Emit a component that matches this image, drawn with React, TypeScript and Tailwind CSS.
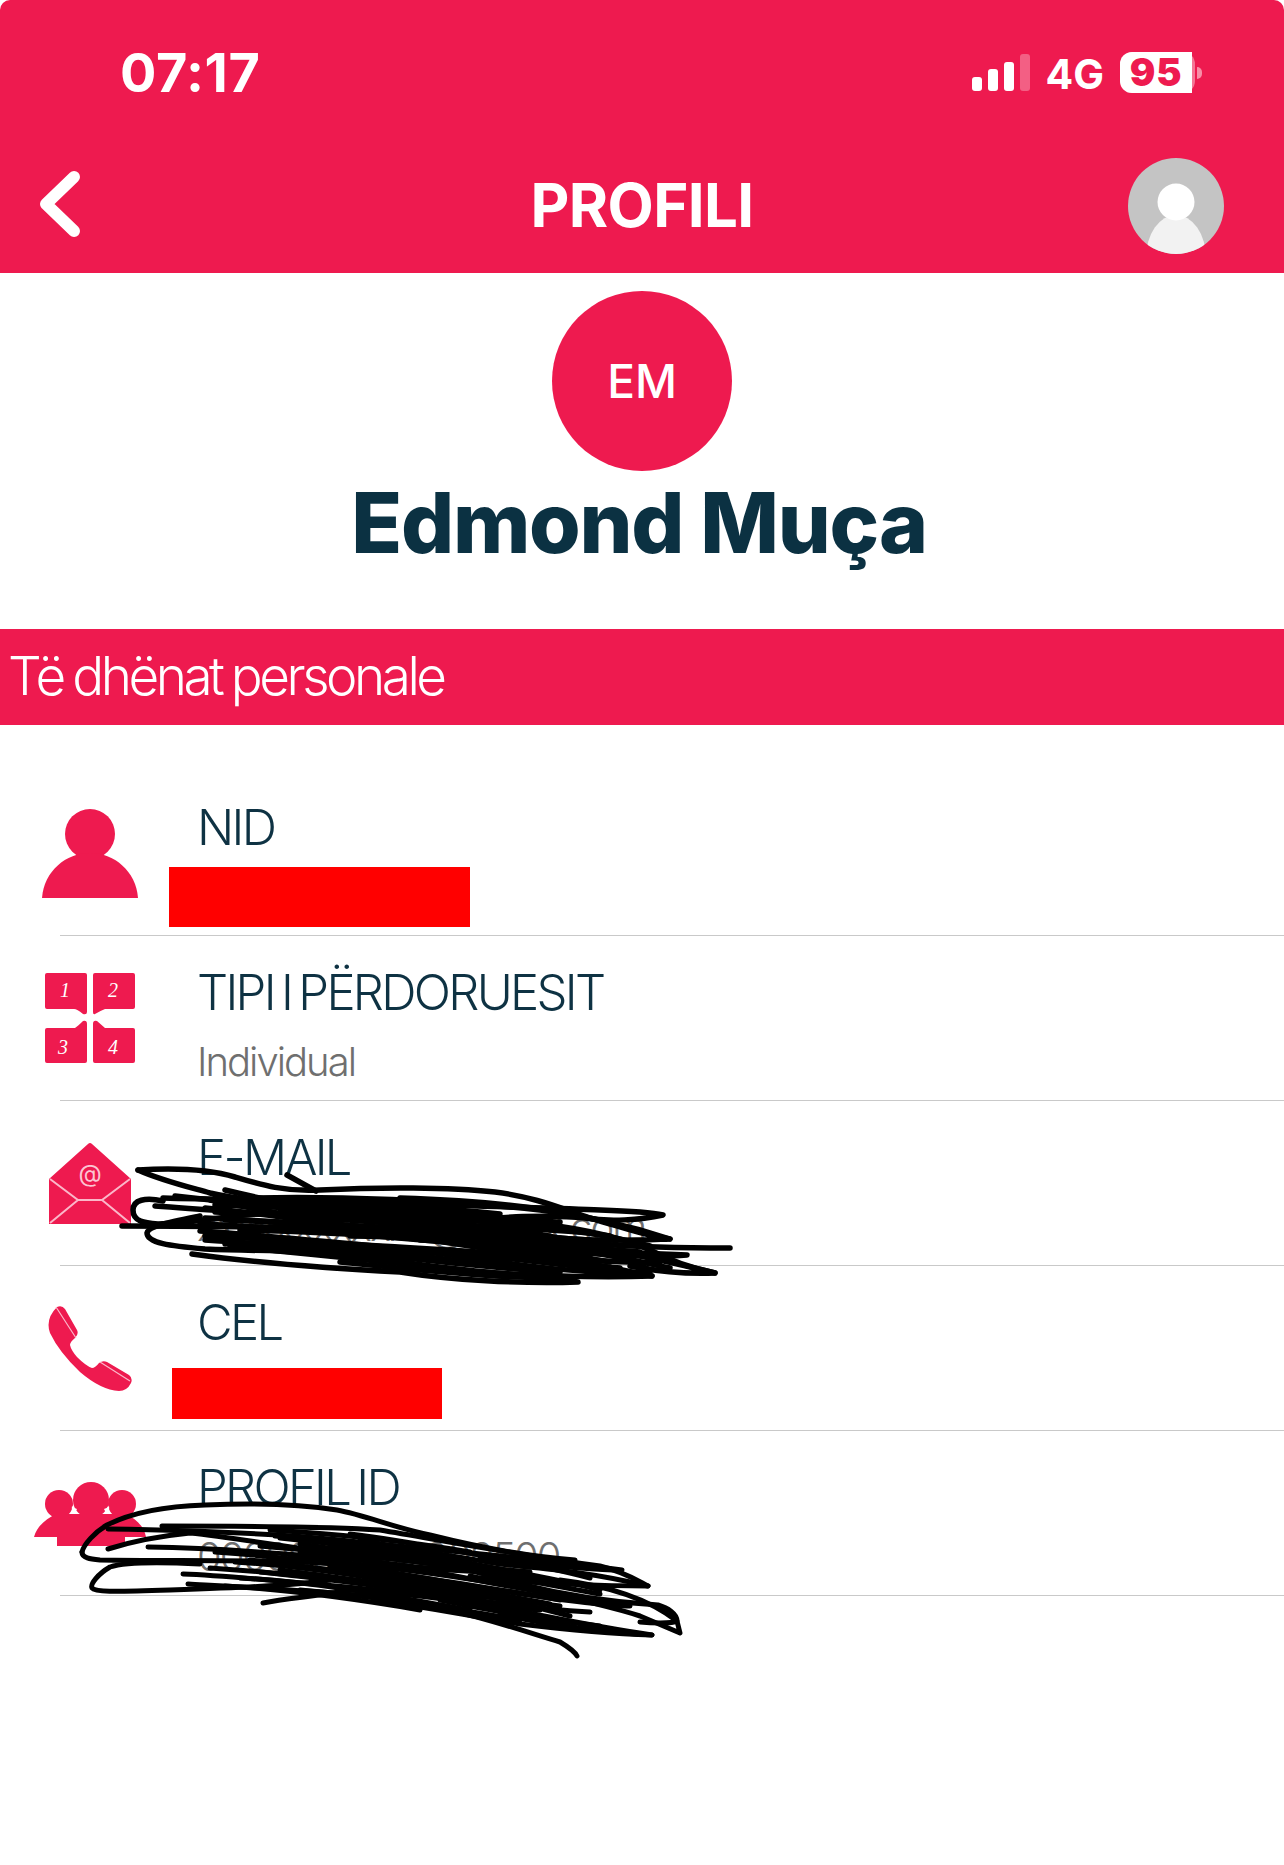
const scribbleA = [
  "M138 1170 C170 1168 205 1168 235 1177 C262 1185 285 1192 320 1190 C380 1187 450 1187 495 1192 C535 1197 560 1208 590 1218 C625 1228 645 1236 670 1239 C640 1240 600 1242 560 1238",
  "M138 1170 C160 1180 185 1186 210 1193 C240 1200 280 1204 340 1206 C420 1210 500 1216 560 1226",
  "M287 1175 L316 1191",
  "M163 1198 C230 1200 330 1200 420 1204 C500 1207 560 1208 600 1210 C630 1211 650 1212 663 1215 C640 1220 610 1222 585 1218 C530 1212 460 1222 380 1226",
  "M163 1201 C145 1197 133 1200 133 1210 C133 1222 145 1223 158 1224 C210 1222 250 1210 300 1214 C380 1220 470 1226 540 1232",
  "M122 1226 C170 1226 230 1226 300 1228 C400 1232 500 1236 600 1244 C650 1248 690 1248 730 1248",
  "M200 1216 C170 1222 148 1226 147 1233 C147 1243 170 1246 205 1249 C270 1252 340 1250 420 1252 C500 1256 560 1264 652 1276 C600 1278 540 1276 480 1272",
  "M192 1254 C250 1262 320 1268 400 1272 C450 1280 520 1284 578 1282 C540 1276 470 1272 400 1262 C340 1254 280 1252 230 1246",
  "M155 1206 C240 1212 340 1220 440 1226 C520 1232 590 1246 640 1256 C670 1262 695 1268 715 1273 C690 1274 660 1272 630 1266",
  "M175 1196 C260 1206 360 1214 470 1218 C550 1222 610 1232 650 1250 C665 1258 690 1268 715 1273",
  "M205 1208 C280 1215 380 1232 480 1240 C560 1246 620 1254 687 1255 C640 1258 560 1252 500 1246",
  "M210 1200 C300 1218 420 1240 540 1256 C590 1262 630 1272 652 1276",
  "M225 1220 C320 1224 420 1228 520 1240 C570 1245 610 1250 640 1252",
  "M225 1190 C300 1208 400 1226 500 1230 C560 1234 610 1250 650 1270",
  "M255 1198 C330 1196 450 1200 540 1210 C590 1216 630 1226 670 1239",
  "M205 1236 C300 1240 400 1246 500 1262 C540 1268 600 1274 650 1272",
  "M225 1244 C320 1238 420 1250 520 1254 C570 1258 620 1264 660 1262",
  "M260 1206 C340 1204 430 1212 500 1218 M280 1212 C360 1214 460 1218 560 1228",
  "M240 1230 C340 1232 440 1240 540 1244 M270 1222 C380 1226 470 1232 590 1240",
  "M260 1240 C340 1246 420 1256 520 1268 M300 1250 C380 1252 450 1266 560 1272",
  "M400 1198 C460 1200 520 1204 570 1214 M420 1212 C480 1216 530 1226 610 1236",
  "M330 1218 C400 1216 470 1226 530 1236 M350 1236 C420 1236 480 1246 540 1252",
  "M420 1222 C480 1232 520 1236 590 1250 M450 1250 C510 1258 570 1264 620 1268",
  "M215 1198 C300 1200 400 1204 500 1214 M215 1205 C300 1207 420 1214 560 1222",
  "M215 1212 C300 1216 420 1222 580 1232 M205 1218 C300 1222 420 1232 560 1240",
  "M200 1224 C300 1228 430 1240 590 1256 M200 1231 C300 1238 430 1252 560 1262",
  "M205 1240 C300 1246 430 1260 540 1268 M245 1248 C330 1256 430 1266 500 1276",
  "M420 1240 C480 1242 540 1250 610 1262 M340 1262 C400 1268 470 1276 540 1278",
  "M560 1228 C590 1232 625 1240 650 1246 M570 1250 C610 1254 640 1262 670 1268",
];
const scribbleB = [
  "M82 1552 C84 1544 95 1532 107 1525 C135 1511 170 1506 205 1505 C250 1503 300 1504 337 1510 C365 1515 395 1528 430 1535 C470 1545 520 1556 575 1560",
  "M82 1552 C82 1558 90 1559 100 1560 C160 1561 240 1560 300 1562 C380 1566 470 1570 530 1574",
  "M108 1529 C170 1530 260 1532 340 1540 C430 1550 520 1556 622 1570 C590 1570 540 1565 480 1558",
  "M162 1526 C240 1526 320 1526 380 1530 C440 1540 500 1552 600 1566 C625 1572 640 1582 648 1586 C600 1586 540 1584 480 1578",
  "M108 1549 C130 1542 160 1536 190 1533 C240 1538 300 1550 360 1556 C430 1562 500 1572 560 1582",
  "M148 1547 C220 1548 290 1554 360 1560 C430 1568 520 1592 630 1606 C600 1606 520 1594 470 1586",
  "M200 1564 C160 1562 125 1562 110 1567 C98 1574 90 1584 92 1588 C95 1592 110 1592 170 1590 C230 1588 290 1586 330 1580",
  "M183 1574 C240 1576 330 1586 400 1592 C470 1598 560 1622 652 1635 C620 1634 540 1624 500 1614",
  "M188 1584 C260 1588 340 1592 400 1600 C470 1612 520 1630 560 1642 C570 1648 575 1652 577 1656",
  "M375 1600 C420 1606 470 1616 520 1624 C570 1630 620 1634 652 1635",
  "M263 1603 C290 1598 320 1596 350 1590 C410 1592 480 1606 540 1610",
  "M275 1536 C340 1540 420 1550 500 1564 C540 1568 590 1572 648 1586",
  "M300 1544 C370 1554 450 1562 520 1584 C560 1594 610 1602 658 1605 C668 1608 677 1614 677 1621 C672 1624 650 1623 640 1622",
  "M560 1580 C610 1586 650 1600 677 1621 L680 1633 L640 1616 C590 1600 530 1590 470 1576",
  "M250 1560 C330 1570 430 1580 540 1596 M280 1570 C360 1580 440 1592 560 1606",
  "M300 1552 C370 1560 440 1574 520 1572 M340 1580 C420 1590 490 1606 590 1612",
  "M360 1540 C420 1550 480 1570 540 1578 M420 1552 C470 1566 530 1572 600 1590",
  "M270 1530 C340 1534 400 1540 470 1552 M350 1534 C400 1540 440 1548 510 1560",
  "M215 1552 C300 1558 400 1572 490 1590 M210 1568 C300 1574 400 1586 500 1604",
  "M260 1546 C330 1552 420 1560 490 1572 M240 1578 C320 1582 400 1598 470 1610",
  "M330 1566 C400 1574 470 1584 560 1600 M300 1590 C370 1596 440 1606 520 1620",
  "M400 1560 C460 1566 510 1578 600 1594",
  "M280 1538 C340 1544 400 1552 460 1562 M290 1557 C360 1564 430 1572 500 1584",
  "M235 1562 C300 1566 380 1578 460 1594 M260 1572 C340 1580 410 1590 480 1600",
  "M330 1546 C390 1552 450 1566 530 1572 M360 1572 C420 1582 490 1592 550 1604",
  "M225 1586 C290 1590 350 1598 420 1610 M400 1580 C460 1590 510 1600 570 1616",
  "M430 1546 C480 1556 530 1562 590 1578 M440 1600 C490 1610 530 1618 600 1626",
];
const sans = "font-['Inter',sans-serif]";
const rowLabel = "text-[49px] font-light leading-[64px] tracking-[-0.055em] [word-spacing:-0.08em] text-[#0e3243]";

function PersonIcon() {
  return (
    <svg viewBox="0 0 96 89" className="ml-[42px] mt-[38px] h-[89px] w-[96px] fill-[#ee1a4f]">
      <circle cx="48" cy="25" r="25" />
      <path d="M0 89 C2 62 24 44 48 44 C72 44 94 62 96 89 Z" />
    </svg>
  );
}

function NumbersIcon() {
  return (
    <svg viewBox="0 0 90 90" className="ml-[45px] mt-[37px] h-[90px] w-[90px]">
      <g className="fill-[#ee1a4f]">
        <path d="M2 0 H40 Q42 0 42 2 V39 Q42 42 38 41 Q32 36 29 36 H2 Q0 36 0 34 V2 Q0 0 2 0 Z" />
        <path d="M50 0 H88 Q90 0 90 2 V34 Q90 36 88 36 H60 Q55 38 50 41 Q48 42 48 39 V2 Q48 0 50 0 Z" />
        <path d="M38 48 Q42 47 42 51 V88 Q42 90 40 90 H2 Q0 90 0 88 V57 Q0 55 2 55 H30 Q33 53 38 48 Z" />
        <path d="M52 48 L60 55 H88 Q90 55 90 57 V88 Q90 90 88 90 H50 Q48 90 48 88 V51 Q48 47 52 48 Z" />
      </g>
      <g className="fill-white font-['Liberation_Serif',serif] text-[20px] italic" textAnchor="middle">
        <text x="20" y="24">1</text>
        <text x="68" y="24">2</text>
        <text x="18" y="81">3</text>
        <text x="68" y="81">4</text>
      </g>
    </svg>
  );
}

function MailIcon() {
  return (
    <svg viewBox="0 0 82 81" className="ml-[49px] mt-[42px] h-[81px] w-[82px]">
      <path d="M39 1 Q41 -1 43 1 L82 36 V81 H0 V36 Z" className="fill-[#ee1a4f]" />
      <path d="M1 36 L29 57 H53 L81 36 M1 80 L29 57 M53 57 L81 80" className="fill-none stroke-[#fbb7c9]" strokeWidth="2" />
      <text x="41" y="39" textAnchor="middle" className="fill-[#fcc5d3] text-[24px] font-normal">@</text>
    </svg>
  );
}

function PhoneIcon() {
  return (
    <svg viewBox="0 0 85 85" className="ml-[47px] mt-[40px] h-[85px] w-[85px]">
      <path
        d="M10 1 Q15 -1 18 3 L30 24 Q32 28 28 32 Q23 36 23 39 Q24 44 30 51 Q39 60 45 62 Q48 62 52 57 Q56 54 60 56 L82 69 Q86 72 84 77 Q80 85 72 85 Q54 84 33 66 Q12 46 3 27 Q-2 13 10 1 Z"
        className="fill-[#ee1a4f]"
      />
      <path d="M9 1 L29 32 M53 56 L83 75" className="fill-none stroke-[#fbb7c9]" strokeWidth="1.2" />
    </svg>
  );
}

function GroupIcon() {
  return (
    <svg viewBox="0 0 112 64" className="ml-[34px] mt-[51px] h-[64px] w-[112px] fill-[#ee1a4f]">
      <circle cx="25" cy="22" r="14" />
      <circle cx="57" cy="18" r="18" />
      <circle cx="88" cy="22" r="14" />
      <path d="M0 55 C3 44 12 37 22 32 H92 C102 37 110 44 112 55 H91 V64 H23 V55 Z" />
      <path d="M40 31 Q37 29 38 24 Q41 27 43 27 Q42 30 40 31 Z M73 31 Q76 29 75 24 Q72 27 70 27 Q71 30 73 31 Z" className="fill-white" />
    </svg>
  );
}

function Row({ icon, title, children }: { icon: React.ReactNode; title: string; children: React.ReactNode }) {
  return (
    <div>
      <div className="flex h-[164px]">
        <div className="w-[197px] shrink-0">{icon}</div>
        <div className="min-w-0 flex-1 pt-[25px]">
          <div className={rowLabel}>{title}</div>
          {children}
        </div>
      </div>
      <div className="ml-[60px] h-px bg-[#c9c9c9]" />
    </div>
  );
}

function Value({ text }: { text: string }) {
  return <div className="mt-[9px] text-[40px] font-light leading-[56px] tracking-[-0.05em] text-[#6f6f6f]">{text}</div>;
}

export default function App() {
  return (
    <div className={`relative h-[1865px] w-[1284px] overflow-hidden bg-white ${sans}`}>
      <header className="h-[273px] rounded-t-[10px] bg-[#ee1a4f] text-white">
        <div className="flex h-[146px] items-start justify-between">
          <div className="ml-[120px] mt-[41px] text-[54px] font-bold leading-[64px] tracking-[0.01em]">07:17</div>
          <div className="mr-[82px] mt-[52px] flex items-start">
            <svg viewBox="0 0 58 37" className="mt-[2px] h-[37px] w-[58px] fill-white">
              <rect x="0" y="23" width="10" height="14" rx="3" />
              <rect x="16" y="15" width="10" height="22" rx="3" />
              <rect x="32" y="8" width="10" height="29" rx="3" />
              <rect x="48" y="0" width="10" height="37" rx="3" className="opacity-30" />
            </svg>
            <div className="ml-[16px] mt-0 text-[41px] font-bold leading-[44px]">4G</div>
            <div className="ml-[16px] flex items-center">
              <div className="flex h-[41px] w-[75px] rounded-[12px] bg-white/40">
                <div className="flex w-[72px] items-center justify-center rounded-l-[12px] bg-white text-[38px] font-black leading-[41px] tracking-[0.02em] text-[#ee1a4f]">
                  95
                </div>
              </div>
              <div className="ml-[2px] h-[12px] w-[5px] rounded-r-full bg-white/50" />
            </div>
          </div>
        </div>
        <div className="grid h-[127px] grid-cols-[1fr_auto_1fr] items-start">
          <svg viewBox="0 0 42 68" className="ml-[39px] mt-[24px] h-[68px] w-[42px] fill-none stroke-white" strokeWidth="12" strokeLinecap="round" strokeLinejoin="round">
            <path d="M35 7 L7 34 L35 61" />
          </svg>
          <div className="mt-[27px] text-[60px] font-bold leading-[64px] tracking-[-0.01em]">PROFILI</div>
          <svg viewBox="0 0 96 96" className="mr-[60px] mt-[12px] h-[96px] w-[96px] justify-self-end">
            <clipPath id="avatar-clip">
              <circle cx="48" cy="48" r="48" />
            </clipPath>
            <g clipPath="url(#avatar-clip)">
              <rect width="96" height="96" fill="#c4c4c4" />
              <ellipse cx="48" cy="100" rx="30" ry="43" fill="#f2f2f2" />
              <circle cx="48" cy="44" r="18.5" fill="#ffffff" />
            </g>
          </svg>
        </div>
      </header>

      <section className="flex h-[356px] flex-col items-center pt-[18px]">
        <div className="flex h-[180px] w-[180px] items-center justify-center rounded-full bg-[#ee1a4f] text-[46px] font-medium text-white">EM</div>
        <div className="mr-[6px] mt-[2px] text-[83.5px] font-extrabold leading-[100px] tracking-[-0.015em] text-[#0b3142]">Edmond Muça</div>
      </section>

      <div className="flex h-[96px] items-center bg-[#ee1a4f] pl-[8px] text-[53px] font-light tracking-[-0.065em] [word-spacing:-0.04em] text-white">Të dhënat personale</div>

      <div className="mt-[46px]">
        <Row icon={<PersonIcon />} title="NID">
          <div className="-ml-[28px] mt-[7px] h-[60px] w-[301px] bg-[#ff0000]" />
        </Row>
        <Row icon={<NumbersIcon />} title="TIPI I PËRDORUESIT">
          <Value text="Individual" />
        </Row>
        <Row icon={<MailIcon />} title="E-MAIL">
          <Value text="xxxxxxxxxxxx@xxxxx.com" />
        </Row>
        <Row icon={<PhoneIcon />} title="CEL">
          <div className="-ml-[25px] mt-[13px] h-[51px] w-[270px] bg-[#ff0000]" />
        </Row>
        <Row icon={<GroupIcon />} title="PROFIL ID">
          <Value text="0000000000000500" />
        </Row>
      </div>

      <svg viewBox="0 0 1284 1865" className="pointer-events-none absolute inset-0 h-[1865px] w-[1284px] fill-none stroke-black" strokeLinecap="round" strokeLinejoin="round">
        <g strokeWidth="5.5">
          {scribbleA.map((d) => (
            <path key={d} d={d} />
          ))}
        </g>
        <g strokeWidth="5">
          {scribbleB.map((d) => (
            <path key={d} d={d} />
          ))}
        </g>
      </svg>
    </div>
  );
}
